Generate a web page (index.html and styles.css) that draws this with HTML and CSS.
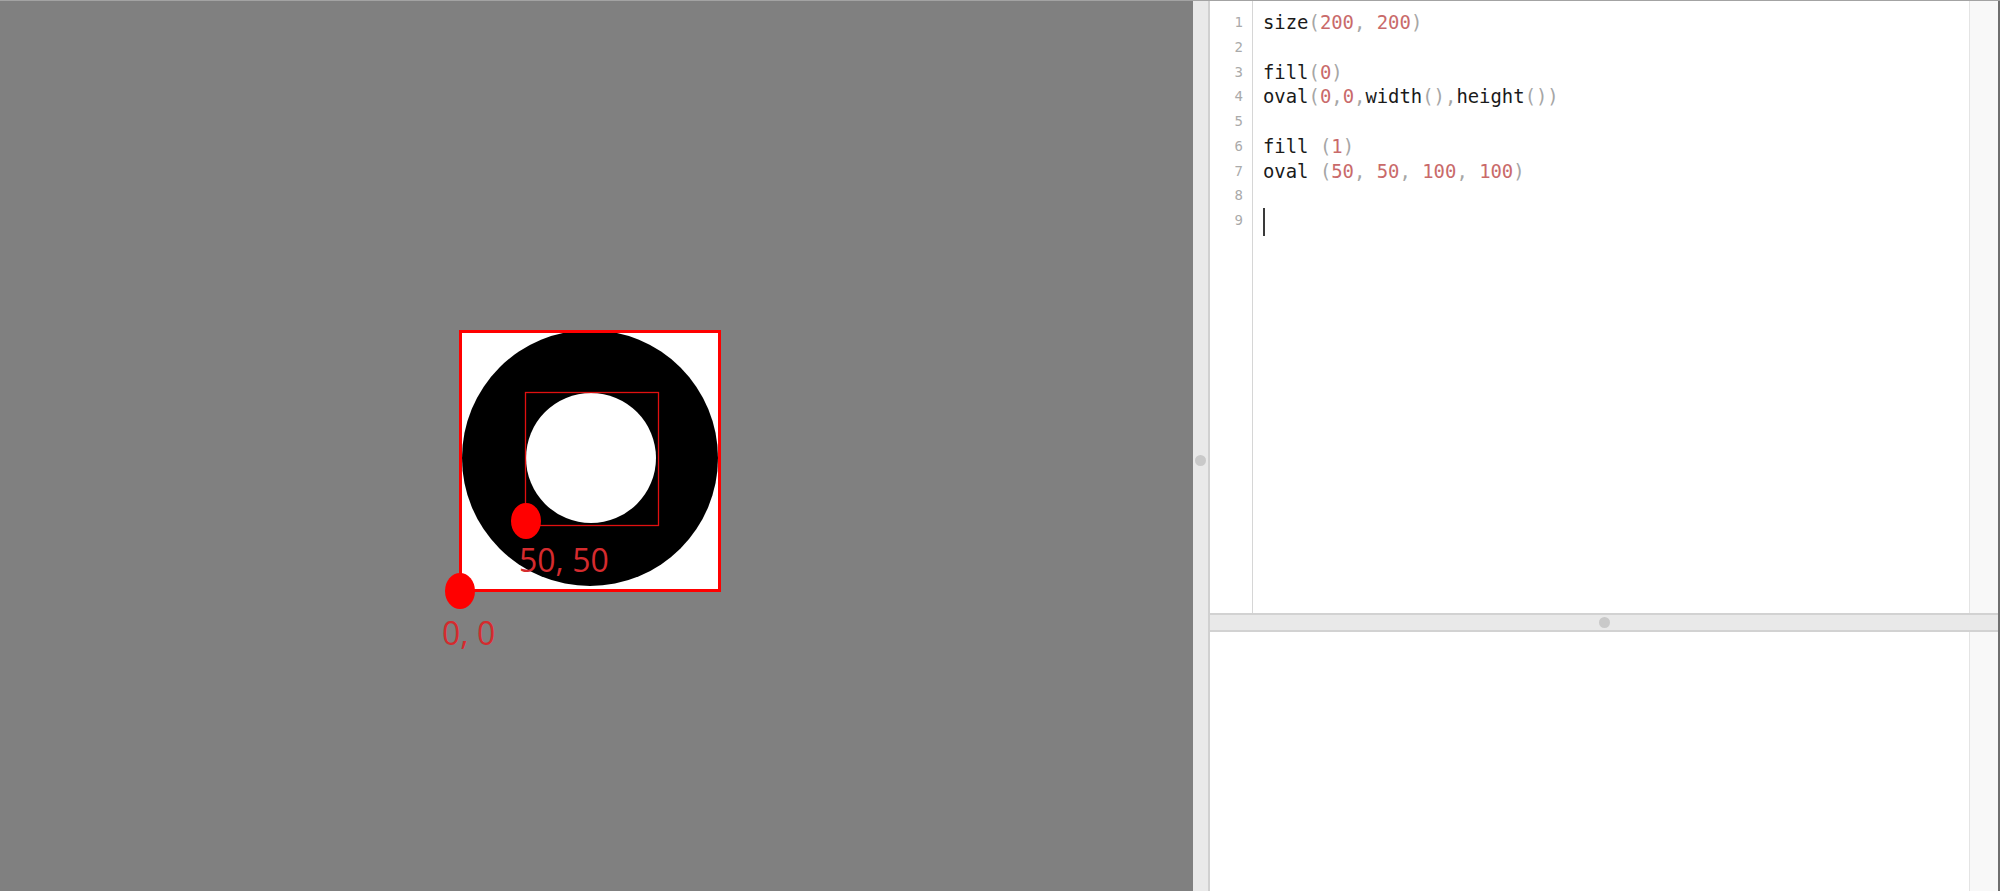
FILE: index.html
```html
<!DOCTYPE html>
<html>
<head>
<meta charset="utf-8">
<link rel="stylesheet" href="styles.css">
</head>
<body>
<div class="app">
  <div class="stage">
    <svg class="sketch" width="1193" height="890" viewBox="0 0 1193 890">
      <rect x="460.5" y="330.5" width="259" height="259" fill="#fff"/>
      <circle cx="590" cy="457" r="128" fill="#000"/>
      <circle cx="591" cy="457" r="65" fill="#fff"/>
      <rect x="460.5" y="330.5" width="259" height="259" fill="none" stroke="#ff0000" stroke-width="3"/>
      <rect x="525.5" y="391.5" width="133" height="133" fill="none" stroke="#e01010" stroke-width="1.3"/>
      <ellipse cx="526" cy="520" rx="15" ry="18" fill="#ff0000"/>
      <ellipse cx="460" cy="590" rx="15" ry="18" fill="#ff0000"/>
      <text class="label" x="519" y="571">50, 50</text>
      <text class="label" x="442" y="644">0, 0</text>
    </svg>
  </div>
  <div class="vsplit"><span class="grip"></span></div>
  <div class="right">
    <div class="editor">
      <div class="gutter">
        <div>1</div><div>2</div><div>3</div><div>4</div><div>5</div><div>6</div><div>7</div><div>8</div><div>9</div>
      </div>
      <div class="code">
        <div class="line">size<span class="p">(</span><span class="n">200</span><span class="p">,</span> <span class="n">200</span><span class="p">)</span></div>
        <div class="line"> </div>
        <div class="line">fill<span class="p">(</span><span class="n">0</span><span class="p">)</span></div>
        <div class="line">oval<span class="p">(</span><span class="n">0</span><span class="p">,</span><span class="n">0</span><span class="p">,</span>width<span class="p">(),</span>height<span class="p">())</span></div>
        <div class="line"> </div>
        <div class="line">fill <span class="p">(</span><span class="n">1</span><span class="p">)</span></div>
        <div class="line">oval <span class="p">(</span><span class="n">50</span><span class="p">,</span> <span class="n">50</span><span class="p">,</span> <span class="n">100</span><span class="p">,</span> <span class="n">100</span><span class="p">)</span></div>
        <div class="line"> </div>
        <div class="line"><span class="cursor"></span></div>
      </div>
      <div class="scroll"></div>
    </div>
    <div class="hsplit"><span class="grip"></span></div>
    <div class="output">
      <div class="outbody"></div>
      <div class="scroll"></div>
    </div>
  </div>
</div>
</body>
</html>
```
FILE: styles.css
```css
html, body {
  margin: 0;
  padding: 0;
  background: #808080;
}
.app {
  display: flex;
  width: 2000px;
  height: 891px;
  border-top: 1px solid #a3a3a3;
  box-sizing: border-box;
  overflow: hidden;
}
.stage {
  flex: 0 0 1193px;
  background: #808080;
  position: relative;
}
.sketch {
  display: block;
}
.label {
  font-family: "Open Sans", "Liberation Sans", sans-serif;
  font-size: 32px;
  fill: #d52b2e;
}
.vsplit {
  flex: 0 0 15px;
  background: #e9e9e9;
  border-right: 2px solid #d0d0d0;
  display: flex;
  justify-content: center;
  align-items: center;
  padding-top: 28px;
}
.grip {
  width: 11px;
  height: 11px;
  border-radius: 50%;
  background: #c9c9c9;
}
.right {
  flex: 1;
  display: flex;
  flex-direction: column;
  border-right: 2px solid #6f6f6f;
  background: #fff;
  min-height: 0;
}
.editor {
  flex: 0 0 612px;
  min-height: 0;
  overflow: hidden;
  display: flex;
  background: #fff;
}
.gutter {
  flex: 0 0 33px;
  padding-right: 9px;
  border-right: 1px solid #d6d6d6;
  padding-top: 9px;
  text-align: right;
  font-family: "DejaVu Sans Mono", monospace;
  font-size: 14px;
  line-height: 24.75px;
  color: #aaaaaa;
}
.code {
  flex: 1;
  padding-left: 10px;
  padding-top: 9px;
  font-family: "DejaVu Sans Mono", monospace;
  font-size: 18.9px;
  line-height: 24.75px;
  color: #1a1a1a;
}
.line {
  white-space: pre;
  height: 24.75px;
}
.code .n {
  color: #c96a6a;
}
.code .p {
  color: #a6a6a6;
}
.cursor {
  display: inline-block;
  width: 2px;
  height: 28px;
  background: #3a3a3a;
  vertical-align: -8px;
}
.scroll {
  flex: 0 0 28px;
  background: #f8f8f8;
  border-left: 1px solid #e4e4e4;
}
.hsplit {
  flex: 0 0 15px;
  background: #e9e9e9;
  border-top: 2px solid #d2d2d2;
  border-bottom: 2px solid #d2d2d2;
  display: flex;
  justify-content: center;
  align-items: center;
}
.output {
  flex: 1;
  display: flex;
  background: #fff;
}
.outbody {
  flex: 1;
}
```
